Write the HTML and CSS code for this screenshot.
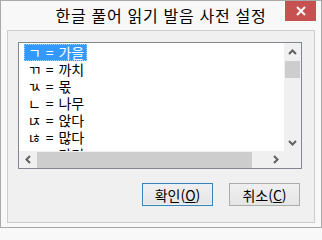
FILE: index.html
```html
<!DOCTYPE html>
<html lang="ko">
<head>
<meta charset="utf-8">
<link rel="stylesheet" href="styles.css">
</head>
<body>
<div class="window">
  <div class="titlebar">
    <span class="spacer"></span>
    <span class="title">한글 풀어 읽기 발음 사전 설정</span>
    <span class="close-wrap">
      <span class="close">
        <svg width="10" height="10" viewBox="0 0 10 10"><path d="M1 1 L9 9 M9 1 L1 9" stroke="#fff" stroke-width="2" fill="none"/></svg>
      </span>
    </span>
  </div>
  <div class="client">
    <div class="listbox">
      <div class="viewport">
        <div class="item selected">ㄱ = 가을</div>
        <div class="item">ㄲ = 까치</div>
        <div class="item">ㄳ = 몫</div>
        <div class="item">ㄴ = 나무</div>
        <div class="item">ㄵ = 앉다</div>
        <div class="item">ㄶ = 많다</div>
        <div class="item">ㄷ = 다리</div>
      </div>
      <div class="vscroll">
        <span class="sbtn"><svg width="9" height="6" viewBox="0 0 9 6"><path d="M1 5 L4.5 1.5 L8 5" stroke="#606060" stroke-width="2" fill="none"/></svg></span>
        <span class="vthumb"></span>
        <span class="vtrack"></span>
        <span class="sbtn"><svg width="9" height="6" viewBox="0 0 9 6"><path d="M1 1 L4.5 4.5 L8 1" stroke="#606060" stroke-width="2" fill="none"/></svg></span>
      </div>
      <div class="hscroll">
        <span class="sbtn"><svg width="6" height="9" viewBox="0 0 6 9"><path d="M5 1 L1.5 4.5 L5 8" stroke="#606060" stroke-width="2" fill="none"/></svg></span>
        <span class="hthumb"></span>
        <span class="htrack"></span>
        <span class="sbtn"><svg width="6" height="9" viewBox="0 0 6 9"><path d="M1 1 L4.5 4.5 L1 8" stroke="#606060" stroke-width="2" fill="none"/></svg></span>
      </div>
      <div class="corner"></div>
    </div>
    <div class="buttons">
      <button class="btn default">확인(<u>O</u>)</button>
      <button class="btn">취소(<u>C</u>)</button>
    </div>
  </div>
</div>
</body>
</html>
```

FILE: styles.css
```css
html, body {
  margin: 0;
  padding: 0;
  background: #f8f8f8;
}

body {
  font-family: "Noto Sans CJK KR", "Noto Sans", sans-serif;
}

.window {
  box-sizing: border-box;
  width: 322px;
  height: 228px;
  border: 1px solid #aaaaaa;
  background: #f8f8f8;
  display: flex;
  flex-direction: column;
  padding: 0 6px 4px 6px;
}

.titlebar {
  height: 29px;
  display: grid;
  grid-template-columns: 1fr auto 1fr;
  flex: none;
}

.title {
  font-size: 16px;
  line-height: 29px;
  color: #000;
  letter-spacing: 0.7px;
  white-space: nowrap;
}

.close-wrap {
  display: flex;
  justify-content: flex-end;
  align-items: flex-start;
  margin-right: -1px;
}

.close {
  width: 31px;
  height: 20px;
  background: #c75050;
  display: flex;
  align-items: center;
  justify-content: center;
}

.client {
  flex: 1;
  border: 1px solid #cccccc;
  background: #f0f0f0;
  padding: 11px 0 0 10px;
  display: flex;
  flex-direction: column;
}

.listbox {
  box-sizing: border-box;
  width: 284px;
  height: 127px;
  border: 1px solid #828790;
  background: #fff;
  display: grid;
  grid-template-columns: 265px 17px;
  grid-template-rows: 108px 17px;
}

.viewport {
  overflow: hidden;
  padding: 1px 0 0 5px;
}

.item {
  box-sizing: border-box;
  height: 17px;
  width: max-content;
  padding: 0 3px 0 4px;
  font-size: 14px;
  line-height: 17px;
  color: #000;
  white-space: nowrap;
  word-spacing: 1px;
}

.item.selected {
  background: #3399ff;
  color: #fff;
  outline: 1px dotted #a9d2fb;
  outline-offset: -1px;
}

.vscroll {
  background: #f0f0f0;
  display: flex;
  flex-direction: column;
}

.hscroll {
  background: #f0f0f0;
  display: flex;
}

.sbtn {
  width: 17px;
  height: 17px;
  flex: none;
  display: flex;
  align-items: center;
  justify-content: center;
}

.vthumb {
  height: 17px;
  margin: 1px 1px 0 1px;
  background: #cdcdcd;
  flex: none;
}

.vtrack {
  flex: 1;
}

.hthumb {
  width: 215px;
  margin: 1px 0 0 1px;
  background: #cdcdcd;
  flex: none;
}

.htrack {
  flex: 1;
}

.corner {
  background: #f0f0f0;
}

.buttons {
  display: flex;
  justify-content: flex-end;
  gap: 16px;
  margin-top: 14px;
  padding-right: 14px;
}

.btn {
  box-sizing: border-box;
  width: 71px;
  height: 23px;
  border: 1px solid #acacac;
  background: linear-gradient(#f0f0f0, #e5e5e5);
  font-family: "Noto Sans CJK KR", "Noto Sans", sans-serif;
  font-size: 14px;
  line-height: 20px;
  color: #000;
  padding: 0;
  margin: 0;
}

.btn.default {
  border-color: #3c7fb1;
  box-shadow: inset 0 0 0 1px #e5f1fb;
}

.btn u {
  text-underline-offset: 1px;
}
```
